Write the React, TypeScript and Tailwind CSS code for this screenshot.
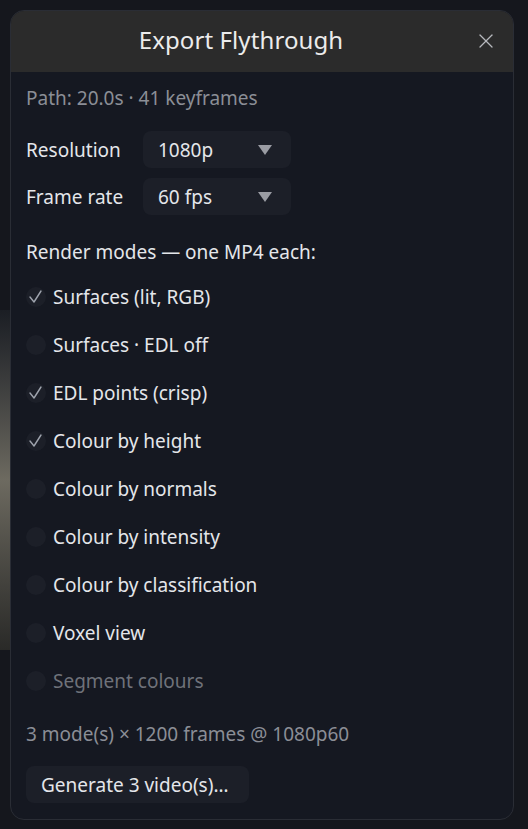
import { X } from 'lucide-react';

const modes = [
  { label: 'Surfaces (lit, RGB)', checked: true },
  { label: 'Surfaces · EDL off', checked: false },
  { label: 'EDL points (crisp)', checked: true },
  { label: 'Colour by height', checked: true },
  { label: 'Colour by normals', checked: false },
  { label: 'Colour by intensity', checked: false },
  { label: 'Colour by classification', checked: false },
  { label: 'Voxel view', checked: false },
  { label: 'Segment colours', checked: false, disabled: true },
];

function Check() {
  return (
    <svg viewBox="0 0 20 20" className="h-5 w-5">
      <path d="M4 10 L8 15 L15 4" fill="none" stroke="#9ea3ad" strokeWidth="1.4" strokeLinecap="round" strokeLinejoin="round" />
    </svg>
  );
}

function Select({ value }: { value: string }) {
  return (
    <div className="flex h-[37px] w-[148px] items-center justify-between rounded-lg bg-[#1c1f28] pl-[15px] pr-[19px] text-[#e4e6ea]">
      <span>{value}</span>
      <svg viewBox="0 0 14 10" className="h-[10px] w-[14px]">
        <path d="M0 0 H14 L7 10 Z" fill="#9a9ca3" />
      </svg>
    </div>
  );
}

export default function App() {
  return (
    <div
      className="relative min-h-[829px] w-full overflow-hidden bg-[#15171d] p-[10px]"
      style={{ fontFamily: '"Noto Sans", "Open Sans", sans-serif' }}
    >
      <div className="absolute left-0 top-[310px] h-[340px] w-[12px] bg-gradient-to-b from-[#1b1e24] via-[#6d6a60] to-[#2a2a28]" />
      <div className="relative flex h-[810px] w-[504px] flex-col overflow-hidden rounded-[14px] border border-[#2a2d35] bg-[#151821]">
        <div className="relative flex h-[61px] shrink-0 items-center justify-center bg-[#2b2b2b] pb-[4px] pr-[42px]">
          <span className="text-[24px] tracking-[0.1px] text-[#ececec]">Export Flythrough</span>
          <X className="absolute right-[15px] top-[18px] h-[24px] w-[24px] text-[#b6b8bd]" strokeWidth={1.3} />
        </div>
        <div className="flex flex-col px-[15px] text-[19px] leading-[26px] text-[#e4e6ea]">
          <div className="mt-[13px] text-[#8b8e96]">Path: 20.0s · 41 keyframes</div>
          <div className="mt-[20px] flex items-center">
            <span className="w-[117px]">Resolution</span>
            <Select value="1080p" />
          </div>
          <div className="mt-[10px] flex items-center">
            <span className="w-[117px]">Frame rate</span>
            <Select value="60 fps" />
          </div>
          <div className="mt-[24px]">Render modes — one MP4 each:</div>
          <div className="mt-[19px] flex flex-col gap-[22px]">
            {modes.map((m) => (
              <div key={m.label} className="flex h-[26px] items-center gap-[7px]">
                <div className="flex h-[20px] w-[20px] items-center justify-center rounded-full bg-[#1c1f28]">
                  {m.checked && <Check />}
                </div>
                <span className={m.disabled ? 'text-[#6f727a]' : ''}>{m.label}</span>
              </div>
            ))}
          </div>
          <div className="mt-[27px] text-[#8b8e96]">3 mode(s) × 1200 frames @ 1080p60</div>
          <div className="mt-[19px]">
            <button className="h-[37px] rounded-lg bg-[#1c1f28] pl-[15px] pr-[21px] text-[#e4e6ea]">
              Generate 3 video(s)…
            </button>
          </div>
        </div>
      </div>
    </div>
  );
}
